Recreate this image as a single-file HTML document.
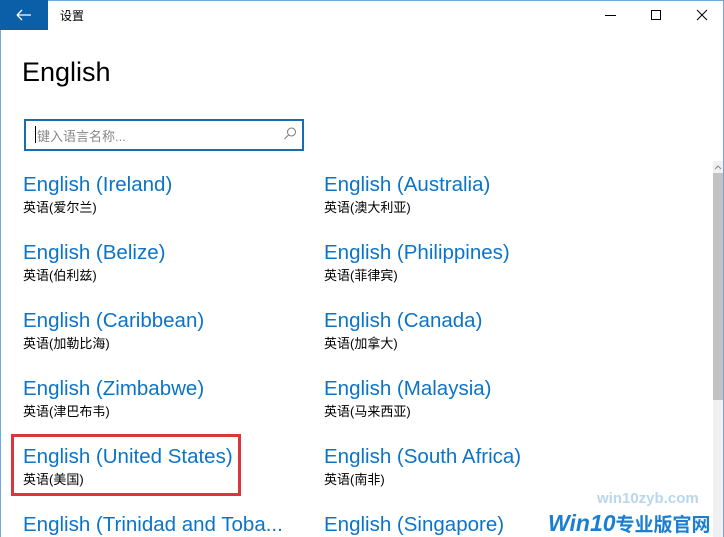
<!DOCTYPE html>
<html><head><meta charset="utf-8"><style>
*{margin:0;padding:0;box-sizing:border-box}
body{width:724px;height:537px;overflow:hidden;background:#fff;font-family:"Liberation Sans","Noto Sans CJK SC",sans-serif;position:relative}
.frame{position:absolute;inset:0;border:1px solid #6fa8dc;border-bottom:none}
.back{position:absolute;left:0;top:0;width:48px;height:30px;background:#0b5ea8}
.t{position:absolute;white-space:nowrap}
.title{font-size:20.5px;color:#0b74c8;margin-top:2px}
.sub{font-size:13px;color:#000;margin-top:-1px}
.sb{position:absolute;left:713px;width:10px}
</style></head><body>
<div class="frame"></div>
<div class="back"><svg width="48" height="30"><path d="M17 15H31M17 15L22 10M17 15L22 20" stroke="#fff" stroke-width="1.3" fill="none"/></svg></div>
<div class="t" style="left:60px;top:7px;font-size:12px">设置</div>
<svg style="position:absolute;left:600px;top:8px" width="120" height="16"><path d="M5 7.5H16" stroke="#000"/><rect x="51.5" y="2.5" width="9" height="9" fill="none" stroke="#000"/><path d="M97 2L107 12M107 2L97 12" stroke="#000"/></svg>
<div class="t" style="left:22px;top:57px;font-size:27px;color:#000">English</div>
<div style="position:absolute;left:24px;top:119px;width:280px;height:32px;border:2px solid #1a6cb0"></div>
<div style="position:absolute;left:35px;top:126px;width:1px;height:17px;background:#000"></div>
<div class="t" style="left:37px;top:126px;font-size:13px;color:#888">键入语言名称...</div>
<svg style="position:absolute;left:282px;top:126px" width="16" height="16"><circle cx="9.5" cy="6" r="4" fill="none" stroke="#777"/><path d="M6.5 9L2.5 13" stroke="#777"/></svg>

<div class="t title" style="left:23px;top:171px">English (Ireland)</div><div class="t sub" style="left:23px;top:198px">英语(爱尔兰)</div>
<div class="t title" style="left:324px;top:171px">English (Australia)</div><div class="t sub" style="left:324px;top:198px">英语(澳大利亚)</div>
<div class="t title" style="left:23px;top:239px">English (Belize)</div><div class="t sub" style="left:23px;top:266px">英语(伯利兹)</div>
<div class="t title" style="left:324px;top:239px">English (Philippines)</div><div class="t sub" style="left:324px;top:266px">英语(菲律宾)</div>
<div class="t title" style="left:23px;top:307px">English (Caribbean)</div><div class="t sub" style="left:23px;top:334px">英语(加勒比海)</div>
<div class="t title" style="left:324px;top:307px">English (Canada)</div><div class="t sub" style="left:324px;top:334px">英语(加拿大)</div>
<div class="t title" style="left:23px;top:375px">English (Zimbabwe)</div><div class="t sub" style="left:23px;top:402px">英语(津巴布韦)</div>
<div class="t title" style="left:324px;top:375px">English (Malaysia)</div><div class="t sub" style="left:324px;top:402px">英语(马来西亚)</div>
<div class="t title" style="left:23px;top:443px">English (United States)</div><div class="t sub" style="left:23px;top:470px">英语(美国)</div>
<div class="t title" style="left:324px;top:443px">English (South Africa)</div><div class="t sub" style="left:324px;top:470px">英语(南非)</div>
<div class="t title" style="left:23px;top:511px">English (Trinidad and Toba...</div>
<div class="t title" style="left:324px;top:511px">English (Singapore)</div>
<div style="position:absolute;left:11px;top:434px;width:230px;height:62px;border:3px solid #d9363e"></div>

<div class="sb" style="top:161px;height:12px;background:#f0f0f0"></div>
<svg style="position:absolute;left:713px;top:163px" width="10" height="8"><path d="M2 6L5 3L8 6" stroke="#888" fill="none"/></svg>
<div class="sb" style="top:173px;height:227px;background:#c2c2c2"></div>
<div class="sb" style="top:400px;height:137px;background:#f0f0f0"></div>
<div class="t" style="left:597px;top:490px;font-size:15px;font-weight:bold;color:#a8cde8;opacity:.8">win10zyb.com</div>
<div class="t" style="left:548px;top:510px;font-size:23px;font-weight:bold;font-style:italic;color:#1a7fd0">Win10<span style="font-style:normal;font-size:19px">专业版官网</span></div>
</body></html>
